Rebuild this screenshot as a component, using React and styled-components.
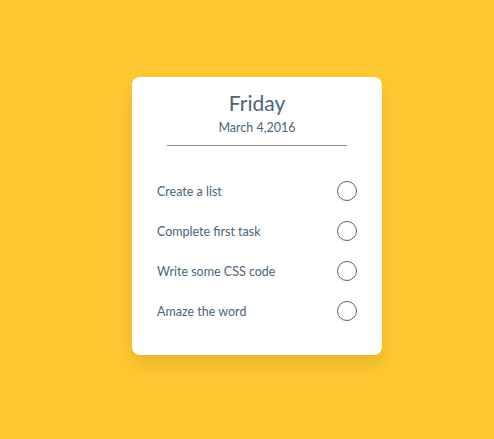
import styled, { createGlobalStyle } from 'styled-components';

const GlobalStyle = createGlobalStyle`
  html, body {
    margin: 0;
    padding: 0;
    background: #ffc933;
  }
  body {
    font-family: 'Lato', 'Open Sans', sans-serif;
  }
`;

const Page = styled.div`
  width: 494px;
  height: 439px;
  background: #ffc933;
  display: flex;
  justify-content: center;
  padding-top: 77px;
  box-sizing: border-box;
`;

const Card = styled.div`
  width: 250px;
  height: 278px;
  box-sizing: border-box;
  background: #fff;
  border-radius: 8px;
  box-shadow: 0 10px 18px rgba(150, 110, 0, 0.22);
  padding: 12px 25px 24px;
  margin-left: 20px;
  color: #4b6479;
`;

const Header = styled.div`
  display: flex;
  flex-direction: column;
  align-items: center;
`;

const Day = styled.h1`
  margin: 0;
  font-size: 21px;
  font-weight: 400;
  line-height: 28px;
`;

const DateText = styled.div`
  font-size: 12.5px;
  line-height: 16px;
  margin-top: 3px;
`;

const Divider = styled.hr`
  width: 180px;
  border: 0;
  border-top: 1px solid #8a8f94;
  margin: 9px 0 0;
`;

const List = styled.ul`
  list-style: none;
  margin: 25px 0 0;
  padding: 0;
`;

const Item = styled.li`
  height: 40px;
  display: flex;
  align-items: center;
  justify-content: space-between;
  font-size: 12.5px;
`;

const Check = styled.span`
  width: 18px;
  height: 18px;
  border: 1px solid #4b6479;
  border-radius: 50%;
`;

const tasks = ['Create a list', 'Complete first task', 'Write some CSS code', 'Amaze the word'];

export default function App() {
  return (
    <>
      <GlobalStyle />
      <Page>
        <Card>
          <Header>
            <Day>Friday</Day>
            <DateText>March 4,2016</DateText>
            <Divider />
          </Header>
          <List>
            {tasks.map((t) => (
              <Item key={t}>
                {t}
                <Check />
              </Item>
            ))}
          </List>
        </Card>
      </Page>
    </>
  );
}
